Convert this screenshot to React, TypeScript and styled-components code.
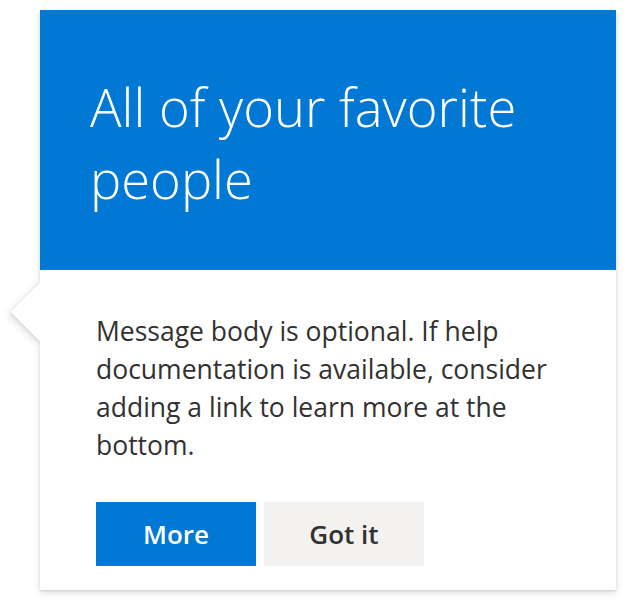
import styled, { createGlobalStyle } from "styled-components";

const GlobalStyle = createGlobalStyle`
  html, body {
    margin: 0;
    padding: 0;
    background: #ffffff;
  }
  body {
    font-family: "Open Sans", "Noto Sans", "Liberation Sans", sans-serif;
  }
`;

const Page = styled.div`
  padding: 10px 18px 14px 40px;
`;

const Bubble = styled.div`
  position: relative;
  width: 576px;
  background: #ffffff;
  box-shadow: 0 3.2px 7.2px rgba(0, 0, 0, 0.13), 0 0.6px 1.8px rgba(0, 0, 0, 0.11);
`;

const Beak = styled.div`
  position: absolute;
  left: -21px;
  top: 281px;
  width: 42px;
  height: 42px;
  background: #ffffff;
  transform: rotate(45deg);
  box-shadow: 0 3.2px 7.2px rgba(0, 0, 0, 0.13), 0 0.6px 1.8px rgba(0, 0, 0, 0.11);
`;

const Main = styled.div`
  position: relative;
  background: #ffffff;
  display: flex;
  flex-direction: column;
`;

const Header = styled.div`
  height: 260px;
  box-sizing: border-box;
  padding: 61px 40px 0 50px;
  background: #0078d4;
`;

const Headline = styled.h1`
  margin: 0;
  font-family: "Open Sans", "Noto Sans", sans-serif;
  font-weight: 300;
  font-size: 52.5px;
  line-height: 72px;
  color: #ffffff;
`;

const Content = styled.div`
  padding: 42px 50px 24px 56px;
  display: flex;
  flex-direction: column;
  gap: 38px;
`;

const Body = styled.p`
  margin: 0;
  font-size: 26.5px;
  line-height: 38px;
  color: #323130;
`;

const Actions = styled.div`
  display: flex;
  gap: 8px;
`;

const Button = styled.button<{ $primary?: boolean }>`
  width: 160px;
  height: 64px;
  border: none;
  padding: 0;
  font-family: "Open Sans", "Noto Sans", sans-serif;
  font-size: 26px;
  font-weight: 600;
  background: ${(p) => (p.$primary ? "#0078d4" : "#f3f2f1")};
  color: ${(p) => (p.$primary ? "#ffffff" : "#323130")};
  cursor: pointer;
`;

export default function App() {
  return (
    <>
      <GlobalStyle />
      <Page>
        <Bubble>
          <Beak />
          <Main>
            <Header>
              <Headline>All of your favorite people</Headline>
            </Header>
            <Content>
              <Body>
                Message body is optional. If help documentation is available,
                consider adding a link to learn more at the bottom.
              </Body>
              <Actions>
                <Button $primary>More</Button>
                <Button>Got it</Button>
              </Actions>
            </Content>
          </Main>
        </Bubble>
      </Page>
    </>
  );
}
